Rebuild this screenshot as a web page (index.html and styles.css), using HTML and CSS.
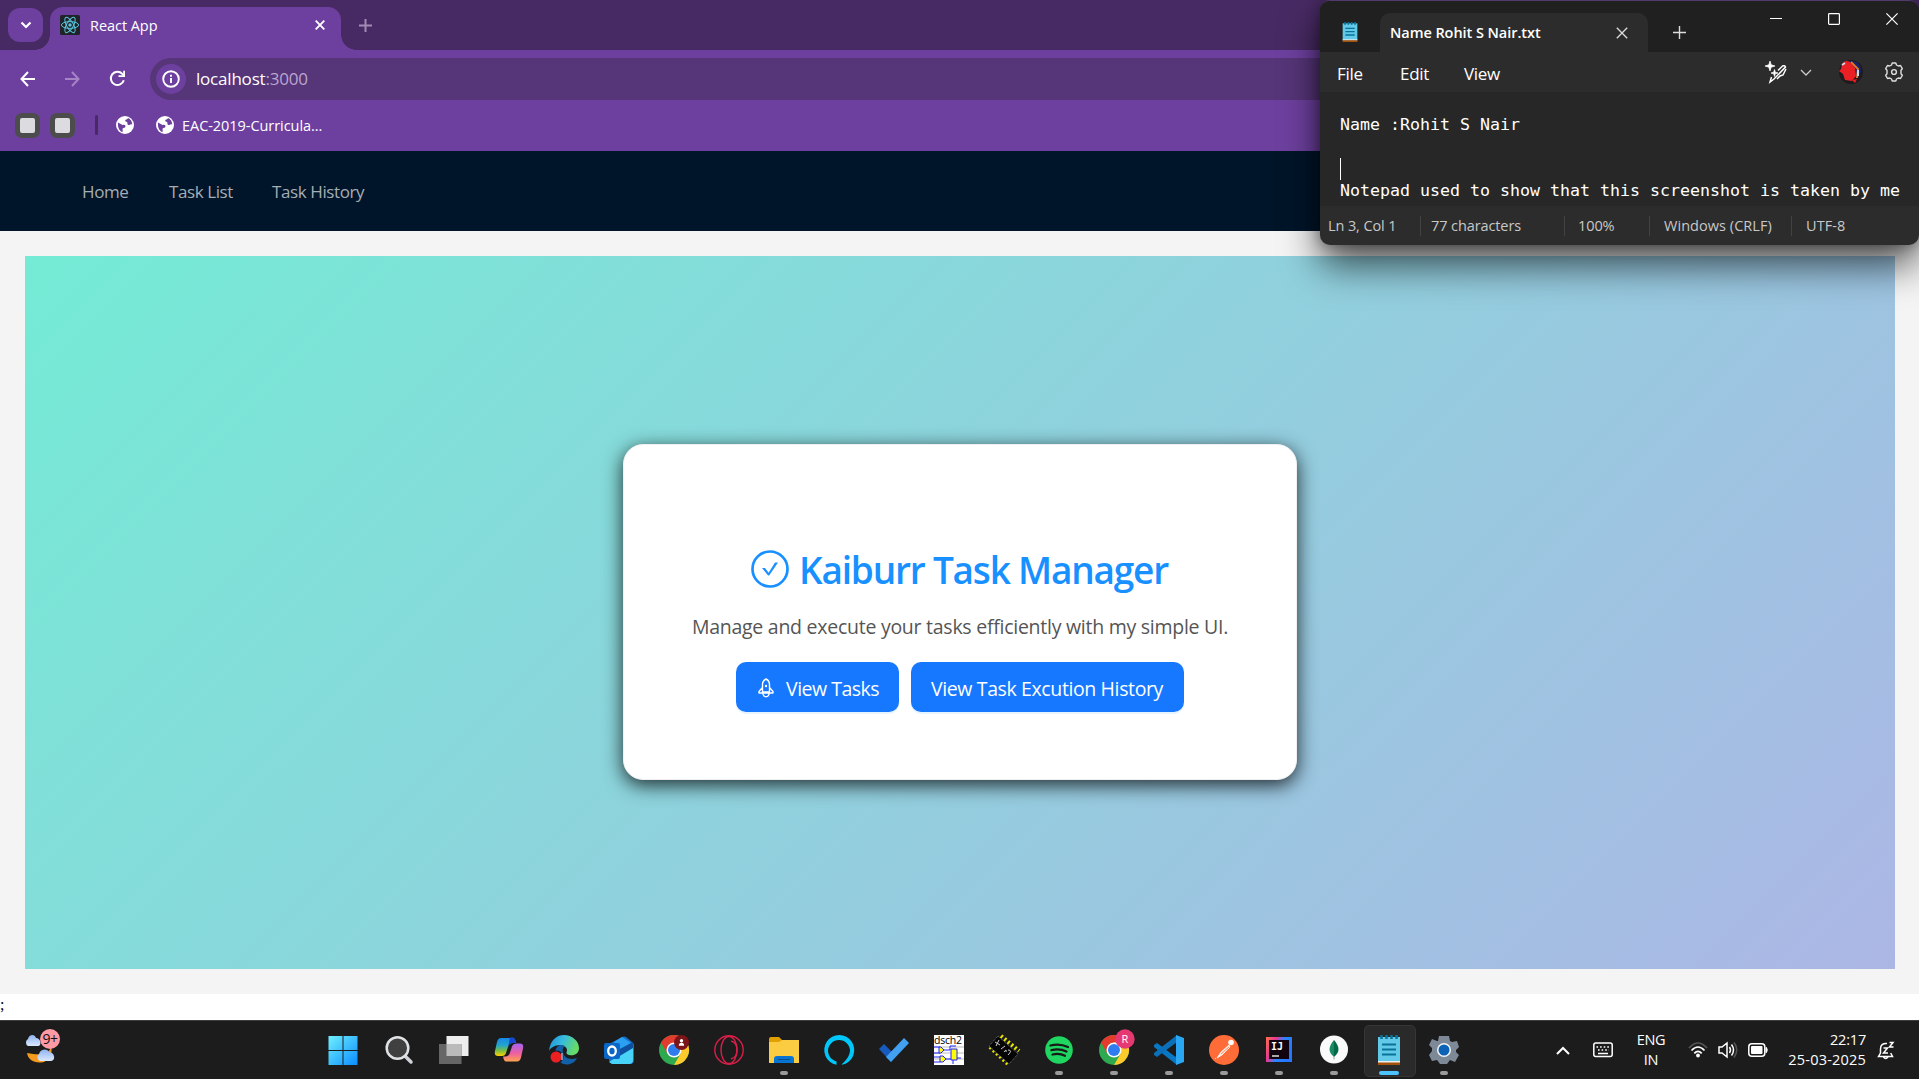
FILE: index.html
```html
<!DOCTYPE html>
<html lang="en">
<head>
<meta charset="utf-8">
<title>React App</title>
<link rel="stylesheet" href="styles.css">
</head>
<body>
<div class="desktop">
  <header class="browser">
    <div class="tabstrip">
      <div class="tab-search"><svg width="12" height="8" viewBox="0 0 12 8"><path d="M1.500 1.500 6 6l4.500-4.500" fill="none" stroke="#fff" stroke-width="2.200"/></svg></div>
      <div class="tab">
        <svg class="favicon" width="20" height="20" viewBox="0 0 20 20"><rect width="20" height="20" rx="1.500" fill="#202428"/><g fill="none" stroke="#58c4dc" stroke-width="1"><ellipse cx="10" cy="10" rx="8.600" ry="3.400"/><ellipse cx="10" cy="10" rx="8.600" ry="3.400" transform="rotate(60 10 10)"/><ellipse cx="10" cy="10" rx="8.600" ry="3.400" transform="rotate(120 10 10)"/></g><circle cx="10" cy="10" r="1.700" fill="#58c4dc"/></svg>
        <span class="tab-title">React App</span>
        <svg width="10" height="10" viewBox="0 0 10 10"><path d="M.7.7l8.600 8.600M9.300.7.7 9.300" stroke="#fff" stroke-width="1.900"/></svg>
      </div>
      <svg class="new-tab" width="13" height="13" viewBox="0 0 13 13"><path d="M6.500 0v13M0 6.500h13" stroke="#a18bb5" stroke-width="2"/></svg>
    </div>
    <div class="toolbar">
      <svg class="nav-back" width="16" height="16" viewBox="0 0 16 16"><path d="M8 1 1.500 8 8 15M1.500 8H15" fill="none" stroke="#fff" stroke-width="2"/></svg>
      <svg class="nav-forward" width="16" height="16" viewBox="0 0 16 16"><path d="M8 1l6.500 7L8 15M14.500 8H1" fill="none" stroke="#a584c6" stroke-width="2"/></svg>
      <svg class="nav-reload" width="17" height="17" viewBox="0 0 17 17"><path d="M14.800 10.200A6.600 6.600 0 1 1 13.300 3.900L15 5.600" fill="none" stroke="#fff" stroke-width="2"/><path d="M16 .8V7H9.500V5.200h4.700V.8z" fill="#fff"/></svg>
      <div class="omnibox">
        <span class="site-info"><svg width="18" height="18" viewBox="0 0 18 18"><circle cx="9" cy="9" r="7.800" fill="none" stroke="#fff" stroke-width="1.900"/><path d="M9 8v5M9 4.700v2" stroke="#fff" stroke-width="1.900"/></svg></span>
        <span class="url">localhost<span class="port">:3000</span></span>
      </div>
    </div>
    <div class="bookmarks">
      <i class="app-tile"></i><i class="app-tile"></i><i class="separator"></i>
      <svg class="globe" width="18" height="18" viewBox="0 0 18 18"><circle cx="9" cy="9" r="9" fill="#fff"/><path d="M2 6.500l4.500 2.400c2.500-.6 3.500.6 2.800 2-.7 1.300-3 .4-2.700 2.500v2.800C3.500 15 1.600 12 2 6.500zM12 2c-.5 1.800-2.600 1.200-2.800 2.600-.2 1.700 1.700.8 2.200 2 .4 1.300-.6 2 1 2.400 1.500.4 1.300-1.400 3.800-.6C16.100 5.500 14.600 3 12 2z" fill="#6d409f"/></svg>
      <svg class="globe globe-two" width="18" height="18" viewBox="0 0 18 18"><circle cx="9" cy="9" r="9" fill="#fff"/><path d="M2 6.500l4.500 2.400c2.500-.6 3.500.6 2.800 2-.7 1.300-3 .4-2.700 2.500v2.800C3.500 15 1.600 12 2 6.500zM12 2c-.5 1.800-2.600 1.200-2.800 2.600-.2 1.700 1.700.8 2.200 2 .4 1.300-.6 2 1 2.400 1.500.4 1.300-1.400 3.800-.6C16.100 5.500 14.600 3 12 2z" fill="#6d409f"/></svg>
      <span class="bookmark-label">EAC-2019-Curricula...</span>
    </div>
  </header>

  <nav class="site-nav"><a>Home</a><a>Task List</a><a>Task History</a></nav>

  <main class="page">
    <section class="hero">
      <div class="card">
        <h1><svg width="38" height="38" viewBox="0 0 38 38"><circle cx="19" cy="19" r="17.500" fill="none" stroke="#1890ff" stroke-width="2.700"/><path d="M11 18h3l3.600 4.700L24 12.500h3L18.300 25.200q-.7.700-1.400 0z" fill="#1890ff"/></svg><span class="title-text">Kaiburr Task Manager</span></h1>
        <p>Manage and execute your tasks efficiently with my simple UI.</p>
        <div class="actions">
          <button class="btn btn-tasks"><svg width="16" height="20" viewBox="0 0 16 20"><path d="M4.500 14V6.500C4.500 4 6 2 8 1c2 1 3.500 3 3.500 5.500V14zM4.500 9.500 1 13.500V15h14v-1.500l-3.500-4M4.800 15c.5 5 5.900 5 6.400 0" fill="none" stroke="#fff" stroke-width="1.400" stroke-linejoin="round"/><circle cx="8" cy="8" r="1.200" fill="#fff"/></svg><span>View Tasks</span></button>
          <button class="btn btn-history"><span>View Task Excution History</span></button>
        </div>
      </div>
    </section>
  </main>
  <div class="stray">;</div>

  <footer class="taskbar">
    <div class="weather">
      <svg width="36" height="38" viewBox="0 0 36 38"><defs><linearGradient id="cloud" x2="0" y2="1"><stop stop-color="#8fb4f2"/><stop offset="1" stop-color="#dce8fb"/></linearGradient></defs><path d="M27 18c-1 8-9 10-24 7 1 7 8 11 17 9 6-3 9-9 7-16z" fill="#f39a1f"/><path d="M4 18a4 4 0 0 1 0-7C5 6 11 6 12 10c5 0 6 8 2 8z" fill="url(#cloud)"/><path d="M16 33a4 4 0 0 1-1-7c2-6 9-5 10-2 6 0 7 9 2 9z" fill="url(#cloud)"/></svg>
      <span class="weather-badge">9+</span>
    </div>
    <div class="apps">
      <div class="app"><svg viewBox="0 0 30 30"><defs><linearGradient id="win" x2="1" y2="1"><stop stop-color="#6ff0ff"/><stop offset="1" stop-color="#0a8cff"/></linearGradient></defs><path d="M-.5 1h14v14h-14zM14.500 1h14v14h-14zM-.5 16h14v14h-14zM14.500 16h14v14h-14z" fill="url(#win)"/></svg></div>
      <div class="app"><svg viewBox="0 0 30 30"><path d="M20 20l7 7" stroke="#d0d3d8" stroke-width="3.500" stroke-linecap="round"/><circle cx="13.500" cy="13" r="10.800" fill="#404040" stroke="#e0e3e6" stroke-width="2.500"/></svg></div>
      <div class="app"><svg viewBox="0 0 30 30"><path d="M7.500 1h22v20h-22z" fill="#eee"/><path d="M0 9h22.500v20H0z" fill="#666"/><path d="M7.500 9h15v12h-15z" fill="#bbb"/></svg></div>
      <div class="app"><svg viewBox="0 0 30 30"><defs><linearGradient id="cpa" x2="0" y2="1"><stop stop-color="#1786e8"/><stop offset=".4" stop-color="#21a5cf"/><stop offset=".7" stop-color="#79bd45"/><stop offset="1" stop-color="#ffd000"/></linearGradient><linearGradient id="cpb" x2="0" y2="1"><stop stop-color="#a763f0"/><stop offset=".55" stop-color="#ee5fa0"/><stop offset="1" stop-color="#ffa34d"/></linearGradient></defs><path d="M7 3h12q2 0 3 5h-3q-4 0-5 4l-2 6q-1 3-4 3H4q-4 0-3-5l2-9q1-4 4-4z" fill="url(#cpa)"/><path d="M16 2.500h3q2 0 3 5.500h-4q-3 0-4 4z" fill="#1746cf"/><path d="M23 8.500h3q4 0 3 5l-2 9q-1 4-4 4H12q-2 0-3-5h2q4 0 5-4l2-6q1-3 5-3z" fill="url(#cpb)"/></svg></div>
      <div class="app"><svg viewBox="0 0 30 30"><defs><linearGradient id="edg" x2="1" y2=".3"><stop stop-color="#1c91d8"/><stop offset=".5" stop-color="#38bbdf"/><stop offset="1" stop-color="#65dc67"/></linearGradient></defs><path d="M0 16C1 6 7 0 15 0c8 0 15 6 15 13 0 6-5 8-10 7-4-1-2-3-2-5 0-3-4-5-7-5-5 0-10 3-11 6z" fill="url(#edg)"/><path d="M11 10C5 12 5 21 10 26c5 6 15 4 18-3-6 2-12 1-14-5-1-3 0-6 2-7-2-1-4-1-5-1z" fill="#1260a8"/><circle cx="8" cy="22" r="6.500" fill="#211d2c"/><circle cx="7" cy="22" r="5.500" fill="#eb2020"/><path d="M13 18v7" stroke="#9ab3cf" stroke-width="1.500"/></svg></div>
      <div class="app"><svg viewBox="0 0 30 30"><path d="M5 9 18 2q2-1 4 0l6 5q2 1 2 3v15q0 4-4 4H10q-4 0-5-4z" fill="#1470c8"/><path d="m18 2 9 6-12 8-5-9z" fill="#2b9ff0"/><path d="M5 27 29 11v14q0 4-4 4H8z" fill="#49d2f7"/><path d="m14 15 15-8v6L14 22z" fill="#0e4f9f"/><rect y="8" width="16" height="16" rx="2" fill="#0b67c7"/><ellipse cx="8" cy="16" rx="3.800" ry="4.500" fill="none" stroke="#fff" stroke-width="2.300"/></svg></div>
      <div class="app"><svg viewBox="0 0 30 30"><g id="chrome"><circle cx="15" cy="15" r="15" fill="#2da94f"/><path d="M15 15 2 7.500A15 15 0 0 1 28 7.500H15z" fill="#e33b2e"/><path d="M28 7.500A15 15 0 0 1 15 30l6.500-11.200L15 7.500z" fill="#fdc92b"/><path d="M2 7.500 8.500 18.700 15 7.500z" fill="#e33b2e"/><circle cx="15" cy="15" r="7.500" fill="#fff"/><circle cx="15" cy="15" r="6" fill="#2e7cf0"/></g><circle cx="22.500" cy="7.500" r="7.500" fill="#7c1418"/><circle cx="22.500" cy="5.800" r="1.700" fill="#fff"/><path d="M19.800 10.800q0-3 2.700-3t2.700 3z" fill="#fff"/></svg></div>
      <div class="app"><svg viewBox="0 0 30 30"><g fill="none" stroke="#d81f4a" stroke-width="1.400"><circle cx="15" cy="15" r="14.200"/><ellipse cx="15" cy="15" rx="8" ry="13.500"/><path d="M17 6c8 2 8 16 0 18"/></g></svg></div>
      <div class="app is-open"><svg viewBox="0 0 30 30"><path d="M0 4q0-2 2-2h8l3 3v6H0z" fill="#dfa000"/><path d="M0 7h10l3-2h17v23H0z" fill="#fbcb42"/><path d="M5 28v-4q0-3 3-3h14q3 0 3 3v4z" fill="#0874d1"/><path d="M9 24.500h12" stroke="#084f91"/></svg></div>
      <div class="app"><svg viewBox="0 0 30 30"><path d="M12.500 29.800A15 15 0 1 1 18 29.800C16 29.500 25 25 26 16a11 11 0 1 0-22 0c.5 6 4 9 8.500 10.500z" fill="#00c7fa"/></svg></div>
      <div class="app"><svg viewBox="0 0 30 30"><path d="m0 14 5-5 12 12-5 6z" fill="#185abd"/><path d="m7 22 18-19 5 5-18 19z" fill="#41a0ef"/></svg></div>
      <div class="app"><svg viewBox="0 0 30 30"><path d="M0 0h30v30H0z" fill="#fff"/><path d="M0 12h30M0 18h30M0 24h30" stroke="#bbb"/><text x="0" y="9" class="dsch-text" textLength="28">dsch2</text><path d="M0 12h6M0 18h6M10 15h6v-4h6M0 22h6M0 27h6M10 24h8M23 23h4M19 25v4" fill="none" stroke="#22f"/><path d="M5 12h2l3 3-3 3H5zM6 21h3l3 3-3 3H6zM17 14h6v11h-6z" fill="#ff0" stroke="#22f"/></svg></div>
      <div class="app"><svg viewBox="0 0 30 30"><path d="M12 1 30 16M1 12l18 17" stroke="#e6e600" stroke-width="4" stroke-dasharray="2 2.500"/><path d="m9 1 20 18-9 10L0 11z" fill="#050505" stroke="#777" stroke-dasharray="1 1"/><path d="m6 7 5 3M10 5 7 11M12 14l4-3M15 17q3-4 2 0M19 15q5 0 0 5" fill="none" stroke="#ccc"/></svg></div>
      <div class="app is-open"><svg viewBox="0 0 30 30"><circle cx="15" cy="15" r="13.800" fill="#1fd660"/><path d="M6.500 10.500q9-2.500 17.500 1.500M7.500 15.200q8-2 15 1.300M8.500 19.500q7-1.500 12.500 1.200" fill="none" stroke="#171a18" stroke-width="2.300" stroke-linecap="round"/></svg></div>
      <div class="app is-open"><svg viewBox="0 0 30 30"><use href="#chrome"/><circle cx="26" cy="4" r="9.700" fill="#e63972"/><text x="26" y="8" class="badge-r">R</text></svg></div>
      <div class="app is-open"><svg viewBox="0 0 30 30"><path d="m0 10 3-2 20 15v7L0 12z" fill="#0878c4"/><path d="m0 20 3 2L23 7V0L0 18z" fill="#0b70b8"/><path d="m22 0 8 3v24l-8 3z" fill="#2aa7f2"/></svg></div>
      <div class="app is-open"><svg viewBox="0 0 30 30"><circle cx="15" cy="15" r="15" fill="#ff6c37"/><circle cx="22" cy="7.500" r="2.800" fill="#fff"/><path d="m20 10-8 7-4 6 5-3 8-8zM7 23l-1 1" fill="#ffe9df" stroke="#fff" stroke-width=".7"/><path d="m12 19 8-7" stroke="#ff6c37" stroke-width=".8"/></svg></div>
      <div class="app is-open"><svg viewBox="0 0 30 30"><defs><linearGradient id="ij" x2="1" y2=".4"><stop stop-color="#ff7048"/><stop offset=".35" stop-color="#e93794"/><stop offset=".65" stop-color="#2786ff"/><stop offset="1" stop-color="#2677ff"/></linearGradient></defs><path d="M2 2h26v25H2z" fill="url(#ij)"/><path d="M5 5h20v19H5z" fill="#12040e"/><text x="7" y="14.500" class="ij-text">IJ</text><path d="M8 21h7" stroke="#fff" stroke-width="1.300"/></svg></div>
      <div class="app is-open"><svg viewBox="0 0 30 30"><circle cx="15" cy="14.500" r="14" fill="#fafafa"/><path d="M15 5c-6 7-6 12 0 17z" fill="#178a63"/><path d="M15 5c6 7 6 12 0 17z" fill="#00684a"/><path d="M15 21v3.500" stroke="#8aa99e"/></svg></div>
      <div class="app is-open is-active"><svg viewBox="0 0 30 30"><g id="notepad"><path d="M4 2h22v25H4z" fill="#62cae8"/><path d="M4 26h22v2H4z" fill="#eee"/><path d="M4 27.500h22V30H4z" fill="#a3520b"/><path d="M8 9.500h14M8 14.500h14M8 19.500h14" stroke="#087297" stroke-width="1.900"/><path d="M7.500 0v4M12.500 0v4M17.500 0v4M22.500 0v4" stroke="#087297" stroke-width="2.500"/></g></svg></div>
      <div class="app is-open"><svg viewBox="0 0 30 30"><path d="M9 6 10 1h10l1 5 2 1 5-1 2 6-3 3v2l3 3-4 7-5-2-3 4h-7l-3-4-5 1-3-6 3-4v-3l-3-3 3-6 5 2z" fill="#7d8996"/><circle cx="15" cy="15" r="7" fill="#f3f5f6"/><circle cx="15" cy="15" r="5.500" fill="#0c62b5"/></svg></div>
    </div>
    <div class="tray">
      <svg class="tray-up" width="14" height="9" viewBox="0 0 14 9"><path d="m1 8 6-6 6 6" fill="none" stroke="#fff" stroke-width="2"/></svg>
      <svg class="tray-kb" width="20" height="16" viewBox="0 0 20 16"><rect x=".8" y="1" width="18.400" height="13.500" rx="2" fill="none" stroke="#fff" stroke-width="1.500"/><path d="M3.500 5h13M5 8h11" stroke="#fff" stroke-width="1.600" stroke-dasharray="1.600 2"/><path d="M5 11.500h10" stroke="#fff" stroke-width="1.500"/></svg>
      <div class="lang"><span>ENG</span><span>IN</span></div>
      <svg class="tray-wifi" width="20" height="16" viewBox="0 0 20 16"><g fill="none" stroke="#fff" stroke-width="1.700"><path d="M1 6q9-10 18 0" stroke="#555"/><path d="M3.500 8.500q6.500-7 13 0M6.300 11.300q3.700-4 7.400 0"/></g><circle cx="10" cy="13.500" r="1.900" fill="#fff"/></svg>
      <svg class="tray-vol" width="20" height="18" viewBox="0 0 20 18"><g fill="none" stroke="#fff" stroke-width="1.500"><path d="M1 6h3l5-4v14l-5-4H1zM11.500 6q2 3 0 6M13.500 3.500q4 5.500 0 11"/><path d="M16 1.500q5.500 7 0 15" stroke="#555"/></g></svg>
      <svg class="tray-bat" width="20" height="14" viewBox="0 0 20 14"><rect x=".8" y=".8" width="16" height="12.400" rx="3" fill="none" stroke="#fff" stroke-width="1.500"/><rect x="3" y="3" width="11.500" height="8" rx="1" fill="#fff"/><path d="M18 4.500h.5q1.500 2.500 0 5H18z" fill="#fff" stroke="#fff"/></svg>
      <div class="clock"><span>22:17</span><span class="date">25-03-2025</span></div>
      <svg class="tray-bell" width="18" height="19" viewBox="0 0 18 19"><path d="M10 2.500Q3.500 2 3.500 8v4L1.500 15.500h14L13.700 12M6.500 16q2.200 3 4.400 0M6.500 7h4l-4 5h4.500M12.500 1.500H16l-3.500 4.500H16.500" fill="none" stroke="#fff" stroke-width="1.500"/></svg>
    </div>
  </footer>

  <section class="notepad">
    <div class="np-titlebar">
      <svg class="np-logo" width="20" height="20" viewBox="0 0 30 30"><use href="#notepad"/></svg>
      <div class="np-tab"><span>Name Rohit S Nair.txt</span><svg width="12" height="12" viewBox="0 0 12 12"><path d="m.8.8 10.400 10.400M11.200.8.8 11.200" stroke="#ddd" stroke-width="1.300"/></svg></div>
      <svg class="np-plus" width="13" height="13" viewBox="0 0 13 13"><path d="M6.500 0v13M0 6.500h13" stroke="#ddd" stroke-width="1.400"/></svg>
      <div class="np-controls">
        <svg width="12" height="12" viewBox="0 0 12 12"><path d="M0 5.500h12" stroke="#fff"/></svg>
        <svg width="12" height="12" viewBox="0 0 12 12"><rect x=".6" y=".6" width="10.800" height="10.800" rx=".8" fill="none" stroke="#fff" stroke-width="1.200"/></svg>
        <svg width="12" height="12" viewBox="0 0 12 12"><path d="m.4.4 11.200 11.200M11.600.4.4 11.600" stroke="#fff" stroke-width="1.200"/></svg>
      </div>
    </div>
    <div class="np-menu">
      <span class="m-file">File</span><span class="m-edit">Edit</span><span class="m-view">View</span>
      <div class="np-tools">
        <svg class="np-ai" width="22" height="22" viewBox="0 0 22 22"><path d="M5 0l1.200 3.800L10 5 6.200 6.200 5 10 3.800 6.200 0 5l3.800-1.200zM9.500 8.500l.8 2.700 2.700.8-2.700.8-.8 2.700-.8-2.700L6 12l2.700-.8z" fill="#fff" stroke="#fff" stroke-width=".7"/><path d="M13 9.500 17.500 5q2-1 3 1L9 18l-4 3 1.500-5M21 8l-3 6-3 1-3 3" fill="none" stroke="#fff" stroke-width="1.500"/></svg>
        <svg class="np-chev" width="12" height="7" viewBox="0 0 12 7"><path d="m1 1 5 5 5-5" fill="none" stroke="#ccc" stroke-width="1.300"/></svg>
        <svg class="np-avatar" width="26" height="26" viewBox="0 0 26 26"><circle cx="13" cy="13" r="12" fill="#1d1b1d"/><path d="M11 2q12-1 12 11l-4 7z" fill="#17236e"/><path d="m13 3 7 7-1 9" fill="none" stroke="#df7b22" stroke-width="2"/><path d="M4 5q3-5 8-2l5 6 1 8-4 5-7-1-2-6-4-3 2-2z" fill="#eb2025"/><path d="M20 11v6M4 6l3-2" stroke="#c9d9e8" stroke-width="2"/><path d="m14 21 5-1-2 4z" fill="#f01c1c"/></svg>
        <svg class="np-gear" width="20" height="20" viewBox="0 0 20 20"><path d="m7.500 3 .7-2h3.600l.7 2 1.800 1 2.200-.5 1.800 3.200L17 8.300v3.400l1.300 1.600-1.800 3.200-2.200-.5-1.800 1-.7 2H8.200l-.7-2-1.800-1-2.200.5-1.800-3.200L3 11.700V8.300L1.700 6.700l1.800-3.200 2.200.5z" fill="none" stroke="#ddd" stroke-width="1.400" stroke-linejoin="round"/><circle cx="10" cy="10" r="2.400" fill="none" stroke="#ddd" stroke-width="1.400"/></svg>
      </div>
    </div>
    <div class="np-editor"><div>Name :Rohit S Nair</div><div>&nbsp;</div><div class="caret-line"><i class="caret"></i></div><div>Notepad used to show that this screenshot is taken by me</div></div>
    <div class="np-status"><span class="s-pos">Ln 3, Col 1</span><span class="s-chars">77 characters</span><span class="s-zoom">100%</span><span class="s-eol">Windows (CRLF)</span><span class="s-enc">UTF-8</span></div>
  </section>
</div>
</body>
</html>
```
FILE: styles.css
```css
* { box-sizing: border-box; }
body { margin: 0; font-family: "Open Sans", "Noto Sans", sans-serif; overflow: hidden; }
svg { display: block; flex: none; overflow: visible; }
span, a { white-space: nowrap; }
.desktop { position: relative; width: 1919px; height: 1079px; display: flex; flex-direction: column; background: #fff; overflow: hidden; }

/* Browser frame */
.browser { height: 151px; flex: none; background: #6d409f; color: #fff; }
.tabstrip { height: 50px; display: flex; align-items: center; padding-left: 8px; background: #472a63; }
.tab-search { width: 35px; height: 34px; border-radius: 12px; background: #6d409f; display: flex; align-items: center; justify-content: center; }
.tab { position: relative; width: 291px; height: 43px; margin: 7px 0 0 7px; padding: 0 16px 7px 10px; border-radius: 13px 13px 0 0; background: #6d409f; display: flex; align-items: center; }
.tab::before, .tab::after { content: ""; position: absolute; bottom: 0; width: 15px; height: 15px; }
.tab::before { left: -15px; background: radial-gradient(circle at 0 0, transparent 14.500px, #6d409f 15px); }
.tab::after { right: -15px; background: radial-gradient(circle at 100% 0, transparent 14.500px, #6d409f 15px); }
.tab-title { flex: 1; margin-left: 10px; font-size: 14.500px; letter-spacing: -0.050px; }
.new-tab { margin-left: 18px; }
.toolbar { height: 57px; display: flex; align-items: center; padding-left: 20px; }
.nav-forward { margin-left: 28px; }
.nav-reload { margin-left: 29px; }
.omnibox { flex: 1; height: 42px; margin: 0 0 0 24px; padding-left: 6px; border-radius: 21px 0 0 21px; background: #563578; display: flex; align-items: center; }
.site-info { width: 30px; height: 30px; border-radius: 50%; background: #6d409f; display: flex; align-items: center; justify-content: center; }
.url { margin-left: 10px; font-size: 17px; letter-spacing: -0.200px; }
.port { color: #bba6d0; }
.bookmarks { height: 36px; display: flex; align-items: center; padding-left: 15px; }
.app-tile { width: 25px; height: 25px; margin-right: 10px; border: 5px solid #4c4c4c; border-radius: 7px; background: #dcdce0; }
.separator { width: 3px; height: 20px; margin: 0 18px 0 10px; border-radius: 2px; background: #472a63; }
.globe-two { margin-left: 22px; }
.bookmark-label { margin-left: 8px; font-size: 14.500px; letter-spacing: -0.050px; }

/* Page */
.site-nav { height: 80px; flex: none; display: flex; align-items: center; padding-left: 82px; background: #001529; color: #a6adb4; font-size: 17px; letter-spacing: -0.400px; }
.site-nav a:nth-child(1) { width: 87px; }
.site-nav a:nth-child(2) { width: 103px; }
.page { height: 763px; flex: none; padding: 25px 24px 25px 25px; background: #f4f4f4; }
.hero { height: 713px; padding-bottom: 1px; display: flex; align-items: center; justify-content: center; background: linear-gradient(135deg, #74ebd5, #acb6e5); }
.card { width: 674px; height: 336px; padding-top: 99px; border: 1px solid #f0f0f0; border-radius: 20px; background: #fff; box-shadow: 0 5px 19px rgba(0, 0, 0, .8); display: flex; flex-direction: column; align-items: center; }
h1 { width: 418px; height: 50px; margin: 0; display: flex; align-items: center; color: #1890ff; font-size: 37px; font-weight: 600; letter-spacing: -1.200px; }
.title-text { margin-left: 10px; }
p { height: 30px; margin: 18px 0 20px; line-height: 30px; color: #555; font-size: 19.500px; letter-spacing: -0.260px; white-space: nowrap; }
.actions { display: flex; gap: 12px; }
.btn { height: 50px; padding: 2px 0 0; border: 0; border-radius: 10px; background: #1677ff; color: #fff; font: 19.500px "Open Sans", sans-serif; letter-spacing: -0.500px; box-shadow: 0 2px 0 rgba(5, 145, 255, .1); display: flex; align-items: center; }
.btn-tasks { width: 163px; padding-left: 22px; gap: 12px; }
.btn-history { width: 273px; padding-left: 20px; letter-spacing: -0.380px; }
.stray { height: 26px; flex: none; font: 16px/21px "Liberation Serif", serif; color: #000; }

/* Taskbar */
.taskbar { height: 59px; flex: none; display: flex; background: #1c1c1c; border-top: 1px solid #3d3d3d; color: #fff; }
.weather { position: relative; width: 290.500px; padding: 7px 0 0 24px; margin-right: 26px; }
.weather-badge { position: absolute; left: 40px; top: 8px; width: 20px; height: 20px; border-radius: 50%; background: #ff99a4; color: #111; font-size: 14px; line-height: 20px; text-align: center; letter-spacing: -0.500px; }
.apps { display: flex; }
.app { position: relative; width: 55px; height: 58px; display: flex; align-items: center; justify-content: center; }
.app svg { position: relative; width: 30px; height: 30px; }
.is-open::after { content: ""; position: absolute; bottom: 4px; width: 8px; height: 4px; border-radius: 2px; background: #9a9a9a; }
.is-active::before { content: ""; position: absolute; left: 2px; top: 4px; width: 50px; height: 50px; border: 1px solid #363636; border-radius: 5px; background: #2a2a2a; }
.is-active::after { width: 20px; background: #4cc2ff; }
.dsch-text { font: 10.500px "Open Sans", sans-serif; fill: #000; }
.badge-r { font: 11px "Open Sans", sans-serif; fill: #fff; text-anchor: middle; }
.ij-text { font: bold 10px "DejaVu Sans Mono", monospace; fill: #fff; }
.tray { flex: 1; display: flex; align-items: center; padding-left: 84.500px; font-size: 14.500px; }
.tray-kb { margin-left: 23px; }
.lang { width: 40px; margin-left: 18px; display: flex; flex-direction: column; align-items: center; line-height: 20px; letter-spacing: -0.300px; }
.tray-wifi { margin-left: 17px; }
.tray-vol { margin-left: 10px; }
.tray-bat { margin-left: 10px; }
.clock { width: 98px; display: flex; flex-direction: column; align-items: flex-end; line-height: 20px; letter-spacing: -0.200px; }
.date { letter-spacing: 0.200px; }
.tray-bell { margin-left: 11px; }

/* Notepad window floating over the browser */
.notepad { position: absolute; left: 1320px; top: 0; width: 599px; height: 245px; border-top: 1px solid #523a6c; border-radius: 10px; background: #2c2c2c; color: #fff; overflow: visible; box-shadow: 0 20px 38px rgba(0, 0, 0, .65), 0 0 14px rgba(0, 0, 0, .35); }
.np-titlebar { height: 51px; display: flex; background: #202020; border-radius: 9px 9px 0 0; }
.np-logo { margin: 21px 0 0 20px; }
.np-tab { width: 268px; height: 39px; margin: 12px 0 0 20px; padding: 0 20px 0 10px; border-radius: 10px 10px 0 0; background: #2c2c2c; display: flex; align-items: center; justify-content: space-between; font-size: 14.500px; font-weight: 600; letter-spacing: -0.060px; }
.np-plus { margin: 25px 0 0 25px; }
.np-controls { display: flex; margin: 12px 0 0 84px; gap: 46px; }
.np-menu { height: 40px; display: flex; align-items: center; padding: 2px 15px 0 17px; font-size: 17px; letter-spacing: -0.300px; }
.m-file { width: 63px; }
.m-edit { width: 64px; }
.np-tools { display: flex; align-items: center; margin: -2px 0 0 auto; }
.np-chev { margin-left: 13px; }
.np-avatar { margin-left: 26px; }
.np-gear { margin-left: 20px; }
.np-editor { height: 114px; padding: 22px 0 0 20px; background: #272727; font: 16.610px/22px "DejaVu Sans Mono", monospace; white-space: pre; }
.caret-line { height: 22px; }
.caret { display: block; width: 1px; height: 22px; background: #fff; }
.np-status { height: 38px; display: flex; align-items: center; padding: 2px 0 0 8px; color: #c8c8c8; font-size: 14.500px; letter-spacing: -0.100px; }
.np-status span { height: 20px; line-height: 20px; }
.np-status span + span { border-left: 1px solid #424242; }
.s-pos { width: 92px; }
.s-chars { width: 144px; padding-left: 10px; }
.s-zoom { width: 85px; padding-left: 13px; }
.s-eol { width: 142px; padding-left: 14px; letter-spacing: 0.050px; }
.s-enc { padding-left: 14px; letter-spacing: 0.100px; }
```
